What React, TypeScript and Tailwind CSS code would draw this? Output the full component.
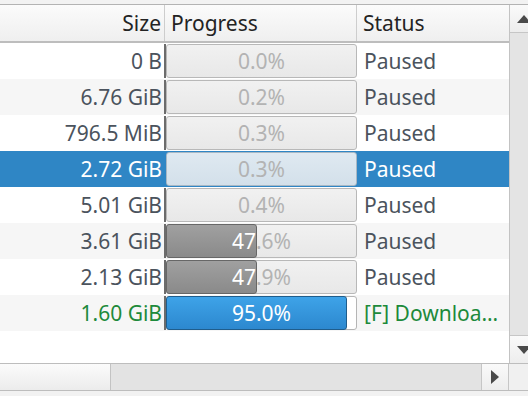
type Row = {
  size: string;
  pct: number;
  status: string;
  kind?: 'selected' | 'active';
};

const rows: Row[] = [
  { size: '0 B', pct: 0.0, status: 'Paused' },
  { size: '6.76 GiB', pct: 0.2, status: 'Paused' },
  { size: '796.5 MiB', pct: 0.3, status: 'Paused' },
  { size: '2.72 GiB', pct: 0.3, status: 'Paused', kind: 'selected' },
  { size: '5.01 GiB', pct: 0.4, status: 'Paused' },
  { size: '3.61 GiB', pct: 47.6, status: 'Paused' },
  { size: '2.13 GiB', pct: 47.9, status: 'Paused' },
  { size: '1.60 GiB', pct: 95.0, status: '[F] Downloa…', kind: 'active' },
];

function Bar({ pct, selected, active }: { pct: number; selected: boolean; active: boolean }) {
  const label = `${pct.toFixed(1)}%`;
  const fillW = Math.round((pct / 100) * 191);
  const base = selected
    ? 'border-[#a9b8c4] bg-linear-to-b from-[#dfe9f1] to-[#d3e0ea]'
    : active
      ? 'border-[#b5b5b5] bg-white'
      : 'border-[#b8b8b8] bg-linear-to-b from-[#f1f1f1] to-[#e8e8e8]';
  const fill = active
    ? 'border-[#1f5d8c] bg-linear-to-b from-[#3ea3e8] to-[#2c88cf]'
    : 'border-[#676767] bg-linear-to-b from-[#a0a0a0] to-[#8a8a8a]';
  return (
    <div className={`relative h-full rounded-[3px] border ${base}`}>
      <div className="flex h-full items-center justify-center whitespace-nowrap text-[#b3b3b3]">{label}</div>
      {fillW > 4 && (
        <div
          className={`absolute -top-px -bottom-px -left-px overflow-hidden rounded-[3px] border ${fill}`}
          style={{ width: fillW }}
        >
          <div className="absolute left-0 top-0 flex h-full w-[189px] items-center justify-center whitespace-nowrap text-white">
            {label}
          </div>
        </div>
      )}
    </div>
  );
}

function TableRow({ row, i }: { row: Row; i: number }) {
  const selected = row.kind === 'selected';
  const active = row.kind === 'active';
  const bg = selected ? 'bg-[#2f86c5]' : i % 2 === 1 ? 'bg-[#f6f6f6]' : 'bg-white';
  const text = selected ? 'text-white' : active ? 'text-[#1d8a3b]' : 'text-[#4b535d]';
  return (
    <div className={`flex h-[36px] ${bg} ${text}`}>
      <div className="flex w-[164px] items-center justify-end whitespace-nowrap pr-[2px]">{row.size}</div>
      <div className="w-[2px] py-px">
        <div className={`h-full ${selected ? '' : 'bg-[#6c6c6c]'}`} />
      </div>
      <div className="w-[191px] py-px">
        <Bar pct={row.pct} selected={selected} active={active} />
      </div>
      <div className="flex flex-1 items-center overflow-hidden whitespace-nowrap pl-[7px]">{row.status}</div>
    </div>
  );
}

function Arrow({ dir }: { dir: 'up' | 'down' | 'right' }) {
  const pts = dir === 'up' ? '0,8 7,0 14,8' : dir === 'down' ? '0,0 14,0 7,8' : '0,0 8,7 0,14';
  const w = dir === 'right' ? 8 : 14;
  const h = dir === 'right' ? 14 : 8;
  return (
    <svg width={w} height={h} viewBox={`0 0 ${w} ${h}`}>
      <polygon points={pts} fill="#4a4a4a" />
    </svg>
  );
}

export default function App() {
  return (
    <div
      className="flex h-[396px] w-[528px] flex-col overflow-hidden bg-[#f2f2f2] text-[21px] leading-none"
      style={{ fontFamily: '"Noto Sans", "Open Sans", sans-serif' }}
    >
      <div className="h-[4px] shrink-0" />
      <div className="h-px shrink-0 bg-[#b3b3b3]" />
      <div className="flex h-[358px] shrink-0">
        {/* table */}
        <div className="flex w-[509px] flex-col bg-white">
          <div className="flex h-[38px] shrink-0 border-b-2 border-[#bdbdbd] bg-linear-to-b from-[#fbfbfb] to-[#efefef] text-[#232323]">
            <div className="flex w-[165px] items-center justify-end border-r border-[#cdcdcd] pr-[3px]">Size</div>
            <div className="flex w-[192px] items-center border-r border-[#cdcdcd] pl-[6px]">Progress</div>
            <div className="flex flex-1 items-center pl-[6px]">Status</div>
          </div>
          {rows.map((r, i) => (
            <TableRow key={i} row={r} i={i} />
          ))}
        </div>
        {/* vertical scrollbar */}
        <div className="w-[19px] overflow-hidden border-l border-[#c3c3c3]">
          <div className="flex h-full w-[28px] flex-col">
            <div className="flex h-[28px] shrink-0 items-center justify-center border-b border-[#c6c6c6] bg-linear-to-b from-[#fafafa] to-[#ededed]">
              <Arrow dir="up" />
            </div>
            <div className="flex-1 bg-[#e4e4e4]" />
            <div className="flex h-[28px] shrink-0 items-center justify-center border-t border-[#c6c6c6] bg-linear-to-b from-[#fafafa] to-[#ededed]">
              <Arrow dir="down" />
            </div>
          </div>
        </div>
      </div>
      {/* horizontal scrollbar */}
      <div className="flex h-[28px] shrink-0 border-y border-[#bdbdbd]">
        <div className="w-[111px] border-r border-[#c3c3c3] bg-linear-to-b from-[#fbfbfb] to-[#ececec]" />
        <div className="w-[370px] bg-[#e3e3e3]" />
        <div className="flex w-[28px] items-center justify-center border-x border-[#c6c6c6] bg-linear-to-b from-[#fafafa] to-[#ededed]">
          <Arrow dir="right" />
        </div>
        <div className="flex-1 bg-[#f0f0f0]" />
      </div>
      <div className="flex-1" />
    </div>
  );
}
